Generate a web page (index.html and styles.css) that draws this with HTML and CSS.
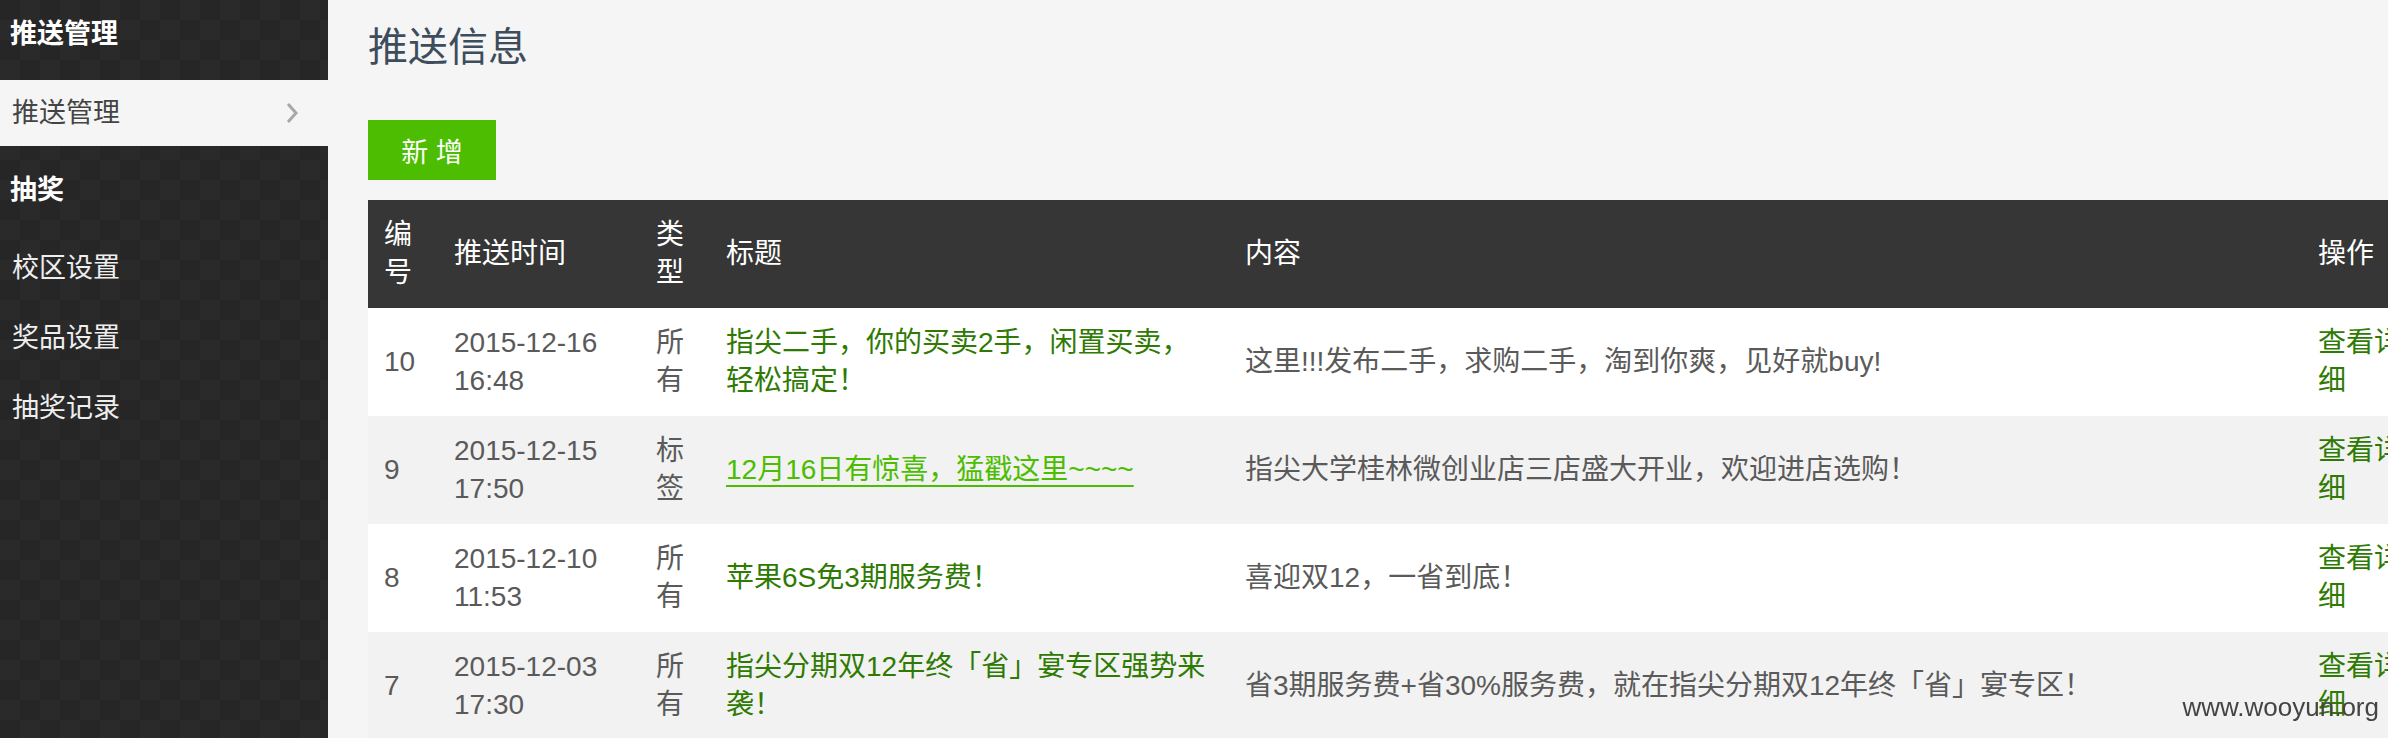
FILE: index.html
```html
<!DOCTYPE html>
<html lang="zh-CN">
<head>
<meta charset="utf-8">
<title>推送信息</title>
<link rel="stylesheet" href="styles.css">
</head>
<body>
<aside class="sidebar">
  <div class="side-head side-head-first">推送管理</div>
  <a class="side-item active" href="#">推送管理
    <svg class="chev" width="12" height="22" viewBox="0 0 12 22"><polyline points="2,2 10,11 2,20" fill="none" stroke="#a8a8a8" stroke-width="3"/></svg>
  </a>
  <div class="side-head side-head-second">抽奖</div>
  <a class="side-item" href="#">校区设置</a>
  <a class="side-item" href="#">奖品设置</a>
  <a class="side-item" href="#">抽奖记录</a>
</aside>
<main class="main">
  <h1 class="page-title">推送信息</h1>
  <a class="btn-add" href="#">新 增</a>
  <table class="grid">
    <colgroup>
      <col class="c-id"><col class="c-time"><col class="c-type"><col class="c-title"><col class="c-content"><col class="c-op">
    </colgroup>
    <thead>
      <tr><th>编号</th><th>推送时间</th><th>类型</th><th>标题</th><th>内容</th><th>操作</th></tr>
    </thead>
    <tbody>
      <tr>
        <td>10</td><td>2015-12-16 16:48</td><td>所有</td>
        <td><a class="t-link" href="#">指尖二手，你的买卖2手，闲置买卖，轻松搞定！</a></td>
        <td>这里!!!发布二手，求购二手，淘到你爽，见好就buy!</td>
        <td><a class="op-link" href="#">查看详细</a></td>
      </tr>
      <tr>
        <td>9</td><td>2015-12-15 17:50</td><td>标签</td>
        <td><a class="t-link hover" href="#">12月16日有惊喜，猛戳这里~~~~</a></td>
        <td>指尖大学桂林微创业店三店盛大开业，欢迎进店选购！</td>
        <td><a class="op-link" href="#">查看详细</a></td>
      </tr>
      <tr>
        <td>8</td><td>2015-12-10 11:53</td><td>所有</td>
        <td><a class="t-link" href="#">苹果6S免3期服务费！</a></td>
        <td>喜迎双12，一省到底！</td>
        <td><a class="op-link" href="#">查看详细</a></td>
      </tr>
      <tr>
        <td>7</td><td>2015-12-03 17:30</td><td>所有</td>
        <td><a class="t-link" href="#">指尖分期双12年终「省」宴专区强势来袭！</a></td>
        <td>省3期服务费+省30%服务费，就在指尖分期双12年终「省」宴专区！</td>
        <td><a class="op-link" href="#">查看详细</a></td>
      </tr>
    </tbody>
  </table>
</main>
<div class="watermark">www.wooyun.org</div>
</body>
</html>
```

FILE: styles.css
```css
html, body {
  margin: 0;
  padding: 0;
  overflow: hidden;
  height: 100%;
}
body {
  display: flex;
  background: #f5f5f5;
  font-family: "Liberation Sans", "Noto Sans CJK SC", sans-serif;
  font-size: 28px;
  color: #555;
}
a { text-decoration: none; }

.sidebar {
  width: 328px;
  flex-shrink: 0;
  min-height: 100%;
  background-color: #282828;
  background-image: repeating-conic-gradient(#2a2a2a 0 25%, #262626 0 50%);
  background-size: 40px 40px;
  display: flex;
  flex-direction: column;
}
.side-head {
  color: #fff;
  font-weight: bold;
  font-size: 27px;
  line-height: 40px;
  padding-left: 10px;
}
.side-head-first { padding-top: 14px; padding-bottom: 26px; }
.side-head-second { padding-top: 24px; padding-bottom: 23px; }
.side-item {
  display: flex;
  align-items: center;
  justify-content: space-between;
  color: #eee;
  font-size: 27px;
  line-height: 40px;
  padding: 15px 30px 15px 12px;
}
.side-item.active {
  background: #f5f5f5;
  color: #444;
  padding-top: 13px;
  padding-bottom: 13px;
}
.chev { display: block; }

.main {
  flex: 1;
  min-width: 0;
  padding-left: 40px;
}
.page-title {
  margin: 19px 0 0 0;
  font-size: 40px;
  line-height: 56px;
  font-weight: normal;
  color: #3e4d5c;
}
.btn-add {
  display: flex;
  align-items: center;
  justify-content: center;
  width: 128px;
  height: 60px;
  margin-top: 45px;
  background: #4cbd00;
  color: #fff;
  font-size: 27px;
}
.grid {
  margin-top: 20px;
  width: 2056px;
  table-layout: fixed;
  border-collapse: collapse;
  font-size: 28px;
  line-height: 38px;
}
.c-id { width: 70px; }
.c-time { width: 202px; }
.c-type { width: 70px; }
.c-title { width: 519px; }
.c-content { width: 1073px; }
.c-op { width: 122px; }
.grid th, .grid td {
  padding: 16px;
  text-align: left;
  vertical-align: middle;
  height: 76px;
}
.grid th {
  background: #363636;
  color: #fff;
  font-weight: normal;
}
.grid td { color: #5a5a5a; }
.grid tbody tr:nth-child(odd) td { background: #fff; }
.grid tbody tr:nth-child(even) td { background: #f2f2f2; }
.t-link { color: #2e7a02; }
.t-link.hover {
  color: #4cbd00;
  text-decoration: underline;
  text-decoration-thickness: 2px;
  text-underline-offset: 6px;
}
.op-link { color: #2e7a02; }

.watermark {
  position: fixed;
  right: 9px;
  bottom: 16px;
  font-family: "Liberation Sans", sans-serif;
  font-size: 26px;
  line-height: 30px;
  color: #444;
}
```
